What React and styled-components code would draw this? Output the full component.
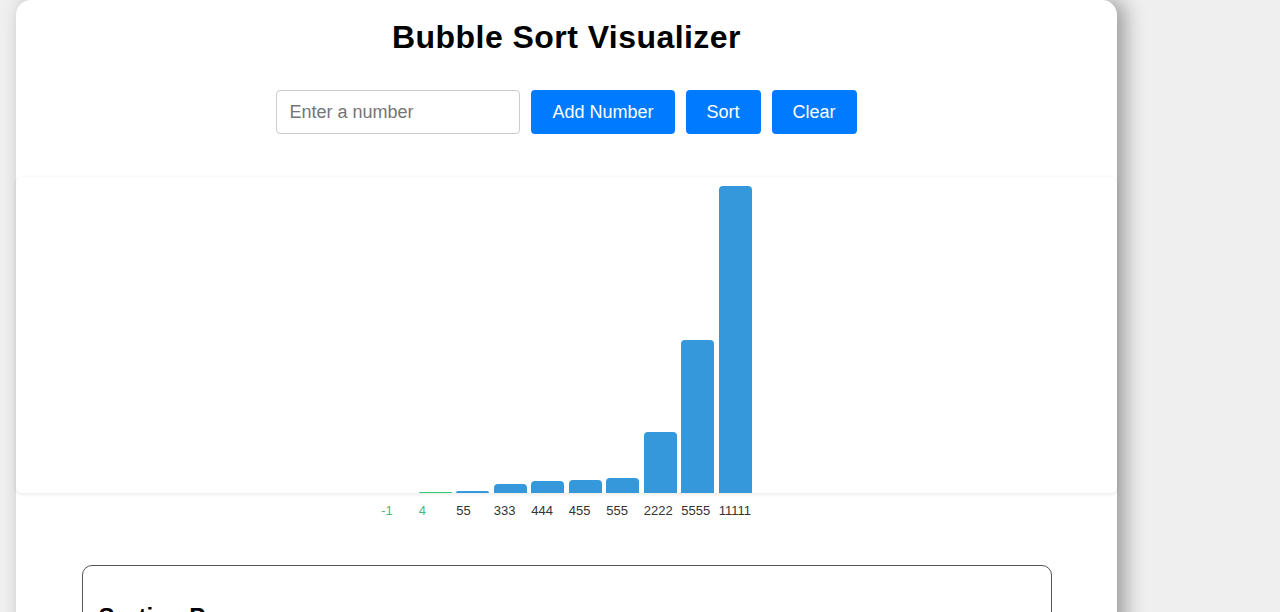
import React, { useState } from 'react';
import styled, { createGlobalStyle } from 'styled-components';

const GlobalStyle = createGlobalStyle`
  html, body {
    margin: 0;
    padding: 0;
    background: #efefef;
    font-family: "Liberation Sans", Arial, sans-serif;
  }

  ::-webkit-scrollbar {
    width: 17px;
  }
  ::-webkit-scrollbar-track {
    background: #f1f1f1;
  }
  ::-webkit-scrollbar-thumb {
    background: #c1c1c1;
    border: 2px solid #f1f1f1;
  }
`;

const Page = styled.div`
  padding: 0 16px 40px;
`;

const Card = styled.div`
  width: 1101px;
  box-sizing: border-box;
  padding: 19px 0 40px;
  background: #fff;
  border-radius: 15px;
  box-shadow: 8px 0 20px rgba(0, 0, 0, 0.35);
`;

const Title = styled.h1`
  margin: 0 0 34px;
  text-align: center;
  font-size: 32px;
  font-weight: bold;
  letter-spacing: 0.45px;
  color: #000;
`;

const Controls = styled.div`
  display: flex;
  justify-content: center;
  gap: 11px;
`;

const NumberInput = styled.input`
  width: 244px;
  height: 44px;
  box-sizing: border-box;
  padding: 0 12px;
  border: 1px solid #ccc;
  border-radius: 4px;
  font-family: inherit;
  font-size: 18px;
  outline: none;

  &::placeholder {
    color: #757575;
  }
`;

const Button = styled.button`
  height: 44px;
  padding: 0 21px;
  border: none;
  border-radius: 4px;
  background: #007bff;
  color: #fff;
  font-family: inherit;
  font-size: 18px;
  cursor: pointer;
`;

const Chart = styled.div`
  height: 316px;
  margin-top: 43px;
  display: flex;
  align-items: flex-end;
  justify-content: center;
  gap: 4.5px;
  border-radius: 6px;
  box-shadow: 0 1px 4px rgba(0, 0, 0, 0.1);
`;

const Bar = styled.div`
  width: 33px;
  flex-shrink: 0;
  background: ${p => (p.$sorted ? '#2ecc71' : '#3498db')};
  border-radius: 4px 4px 0 0;
`;

const Labels = styled.div`
  display: flex;
  justify-content: center;
  gap: 4.5px;
  margin-top: 10px;
`;

const Label = styled.span`
  width: 33px;
  flex-shrink: 0;
  font-size: 13px;
  line-height: 15px;
  white-space: nowrap;
  color: ${p => (p.$sorted ? '#4cb880' : '#333')};
`;

const Steps = styled.div`
  width: 970px;
  box-sizing: border-box;
  margin: 47px auto 0;
  padding: 17px 16px;
  border: 1px solid #555;
  border-radius: 10px;
`;

const StepsTitle = styled.h2`
  margin: 20px 0;
  font-size: 24px;
  color: #000;
`;

const Step = styled.p`
  margin: 6px 0;
  font-size: 15px;
  color: #333;
`;

const MAX_HEIGHT = 307;

const App = () => {
  const [numbers] = useState([-1, 4, 55, 333, 444, 455, 555, 2222, 5555, 11111]);
  const sortedCount = 2;
  const max = Math.max(...numbers);

  return (
    <>
      <GlobalStyle />
      <Page>
        <Card>
          <Title>Bubble Sort Visualizer</Title>
          <Controls>
            <NumberInput type="number" placeholder="Enter a number" />
            <Button>Add Number</Button>
            <Button>Sort</Button>
            <Button>Clear</Button>
          </Controls>

          <Chart>
            {numbers.map((n, i) => {
              const h = n > 0 ? Math.max(1, (n / max) * MAX_HEIGHT) : 0;
              return <Bar key={i} $sorted={i < sortedCount} style={{ height: h }} />;
            })}
          </Chart>
          <Labels>
            {numbers.map((n, i) => (
              <Label key={i} $sorted={i < sortedCount}>{n}</Label>
            ))}
          </Labels>

          <Steps>
            <StepsTitle>Sorting Process</StepsTitle>
            <Step>Pass 1: [55, 4, 333, -1, 444, 555, 455, 2222, 5555, 11111]</Step>
            <Step>Pass 2: [4, 55, -1, 333, 444, 455, 555, 2222, 5555, 11111]</Step>
            <Step>Pass 3: [4, -1, 55, 333, 444, 455, 555, 2222, 5555, 11111]</Step>
            <Step>Pass 4: [-1, 4, 55, 333, 444, 455, 555, 2222, 5555, 11111]</Step>
          </Steps>
        </Card>
      </Page>
    </>
  );
};

export default App;
